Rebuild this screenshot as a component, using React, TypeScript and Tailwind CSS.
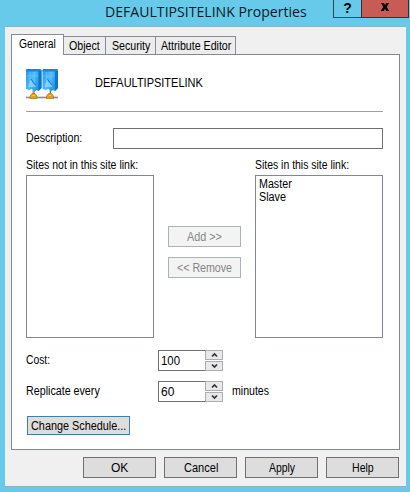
import { useLayoutEffect, useRef, useState } from "react";

/** One line of condensed dialog text, fitted to the given width. */
function Label({ text, width, className = "" }: { text: string; width: number; className?: string }) {
  const ref = useRef<HTMLSpanElement>(null);
  const [scale, setScale] = useState(1);
  useLayoutEffect(() => {
    if (ref.current) setScale(width / ref.current.offsetWidth);
  }, [text, width]);
  return (
    <span className={`block h-[14px] shrink-0 whitespace-nowrap leading-[14px] ${className}`} style={{ width }}>
      <span ref={ref} className="inline-block origin-left" style={{ transform: `scaleX(${scale})` }}>
        {text}
      </span>
    </span>
  );
}

function ServersIcon() {
  return (
    <svg width="32" height="31" viewBox="0 0 32 31" className="block shrink-0">
      <defs>
        <linearGradient id="front" x1="0" y1="0" x2="1" y2="0.5">
          <stop offset="0" stopColor="#2496ee" />
          <stop offset="0.5" stopColor="#4fbcfb" />
          <stop offset="1" stopColor="#1c92ea" />
        </linearGradient>
      </defs>
      <path d="M0 28.5H32" stroke="#8a8a8a" strokeWidth="1.6" />
      {["", "translate(16.5 0)"].map((place) => (
        <g key={place} transform={place}>
          <path d="M7.5 19V26" stroke="#666" strokeWidth="2" />
          <path d="M7 19V25" stroke="#ddd" />
          <path d="M0 1L1 0H14L15.5 1V19L12.5 22L10.5 21L8.5 22.5L6 20L3 21L0 20Z" fill="url(#front)" />
          <path d="M12.5 2L15.5 1V19L12.5 22Z" fill="#0f74cc" />
          <path d="M0 1L1 0H14L15.5 1L12.5 2.4H0Z" fill="#1a86d6" />
          <path d="M4 3V16M8.5 3V17M1 7H12" stroke="#8bd6ff" strokeWidth="0.8" opacity="0.5" />
          <path d="M2 18L4.5 11L10 18Z" fill="#a5e2ff" opacity="0.6" />
          <path d="M5 10L7 13L9.5 16" stroke="#1275c9" strokeWidth="0.9" fill="none" />
          <path d="M4 29.5V27L6 24.5H9L11 27V29.5Z" fill="#dfa01a" stroke="#a96d09" strokeWidth="0.6" />
          <path d="M6.5 26.5H8.5" stroke="#ffd24a" />
        </g>
      ))}
    </svg>
  );
}

function Tab({ text, textWidth, className }: { text: string; textWidth: number; className: string }) {
  return (
    <div className={`flex h-[18px] justify-center border-t border-r border-[#898b94] bg-[#ececec] pt-[2px] ${className}`}>
      <Label text={text} width={textWidth} />
    </div>
  );
}

function Button({ text, textWidth, disabled = false }: { text: string; textWidth: number; disabled?: boolean }) {
  return (
    <button
      className={`flex h-[21px] w-[73px] shrink-0 justify-center border pt-[3px] ${
        disabled ? "border-[#adb2b5] bg-[#f3f3f3] text-[#858585]" : "border-[#707070] bg-[#dddddd]"
      }`}
    >
      <Label text={text} width={textWidth} />
    </button>
  );
}

function Spinner({ value, textWidth }: { value: string; textWidth: number }) {
  return (
    <div className="flex h-[21px] w-[65px] shrink-0 border border-r-0 border-[#707070]">
      <div className="w-[46px] pt-[3px] pl-[2px]">
        <Label text={value} width={textWidth} />
      </div>
      <div className="-my-px flex w-[18px] flex-col justify-between bg-white">
        {["M2 4.5L4.5 2L7 4.5", "M2 1.5L4.5 4L7 1.5"].map((d) => (
          <div key={d} className="flex h-[10px] w-[18px] items-center justify-center border border-[#acacb1] bg-[#e9e9e9]">
            <svg width="9" height="6" viewBox="0 0 9 6">
              <path d={d} fill="none" stroke="#333" strokeWidth="1.7" />
            </svg>
          </div>
        ))}
      </div>
    </div>
  );
}

function SiteList({ label, labelWidth, children }: { label: string; labelWidth: number; children?: React.ReactNode }) {
  return (
    <div className="w-[128px]">
      <Label text={label} width={labelWidth} />
      <div className="mt-[3px] h-[163px] border border-[#828790] pt-px pl-[3px]">{children}</div>
    </div>
  );
}

export default function App() {
  return (
    <div className="h-[492px] w-[410px] overflow-hidden bg-[#67caea] font-['Liberation_Sans',sans-serif] text-[12px] text-black">
      <header className="flex h-[26px] pl-[105px]">
        <Label text="DEFAULTIPSITELINK Properties" width={202} className="mt-[4px] font-['Open_Sans',sans-serif] text-[15px] text-[#10191d]" />
        <button className="ml-[26px] flex h-[18px] w-[29px] justify-center border border-t-0 border-[#2d4953] font-['Liberation_Sans',sans-serif] text-[14px] leading-[16px] font-bold">
          ?
        </button>
        <button className="-ml-px flex h-[18px] w-[48px] justify-center border border-t-0 border-[#4a292a] bg-[#c75b55] pt-[3px]">
          <svg width="10" height="9" viewBox="0 0 10 9">
            <path d="M1 0H4L5 2.2L6.2 0H9L6.7 4L9.2 8H6.2L5 5.7L3.8 8H.7L3.3 4Z" fill="#000" />
          </svg>
        </button>
      </header>

      <main className="ml-[5px] h-[461px] w-[401px] border-t border-b border-[#8fb2bf] bg-[#f0f0f0] px-[6px] pt-[7px]">
        <nav className="flex h-[20px] items-end">
          <div className="relative z-10 -mb-px h-[21px] w-[53px] border border-b-0 border-[#898b94] bg-white pt-[2px] pl-[7px]">
            <Label text="General" width={37} />
          </div>
          <Tab text="Object" textWidth={31} className="w-[42px]" />
          <Tab text="Security" textWidth={38} className="w-[50px]" />
          <Tab text="Attribute Editor" textWidth={70} className="w-[80px]" />
        </nav>

        <section className="h-[396px] w-[389px] border border-[#828790] bg-white pt-[14px] pl-[14px]">
          <div className="flex h-[43px] w-[357px] border-b border-[#a0a0a0]">
            <ServersIcon />
            <Label text="DEFAULTIPSITELINK" width={108} className="mt-[7px] ml-[37px]" />
          </div>

          <div className="mt-[16px] flex h-[21px] items-start">
            <Label text="Description:" width={56} className="mt-[3px]" />
            <div className="ml-[31px] h-[21px] w-[270px] border border-[#707070]" />
          </div>

          <div className="mt-[9px] flex">
            <SiteList label="Sites not in this site link:" labelWidth={112} />
            <div className="mt-[68px] ml-[14px] flex w-[87px] flex-col gap-[10px]">
              <Button text="Add >>" textWidth={35} disabled />
              <Button text="<< Remove" textWidth={55} disabled />
            </div>
            <SiteList label="Sites in this site link:" labelWidth={94}>
              <Label text="Master" width={33} className="-mb-px" />
              <Label text="Slave" width={27} />
            </SiteList>
          </div>

          <div className="mt-[12px] flex h-[21px]">
            <div className="w-[132px] pt-[3px]"><Label text="Cost:" width={24} /></div>
            <Spinner value="100" textWidth={19} />
          </div>
          <div className="mt-[10px] flex h-[21px]">
            <div className="w-[132px] pt-[3px]"><Label text="Replicate every" width={74} /></div>
            <Spinner value="60" textWidth={13} />
            <Label text="minutes" width={37} className="mt-[3px] ml-[9px]" />
          </div>

          <button className="mt-[14px] ml-px flex h-[19px] w-[103px] border border-[#3c7fb1] bg-[#dddddd] pt-[2px] pl-[3px]">
            <Label text="Change Schedule..." width={95} />
          </button>
        </section>

        <footer className="mt-[7px] ml-[72px] flex gap-[8px]">
          <Button text="OK" textWidth={17} />
          <Button text="Cancel" textWidth={34} />
          <Button text="Apply" textWidth={26} />
          <Button text="Help" textWidth={22} />
        </footer>
      </main>
    </div>
  );
}
